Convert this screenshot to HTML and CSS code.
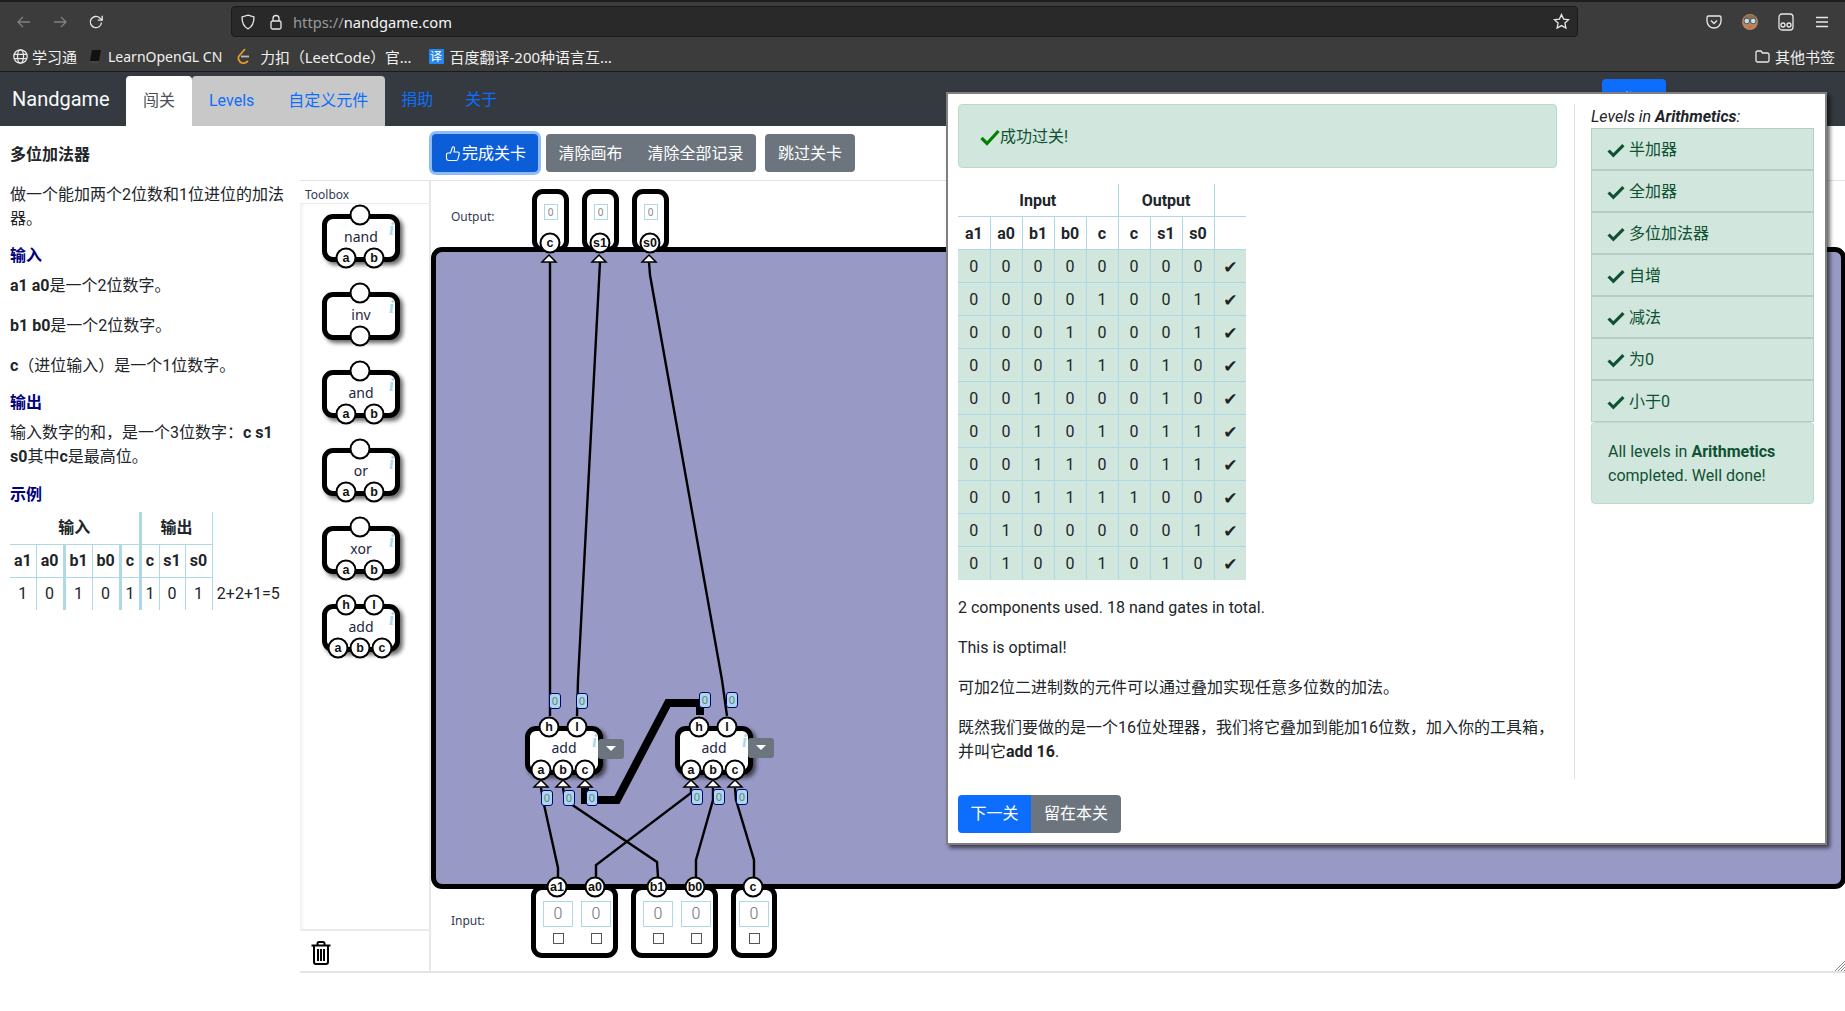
FILE: index.html
```html
<!DOCTYPE html>
<html lang="zh">
<head>
<meta charset="utf-8">
<title>Nandgame</title>
<link rel="stylesheet" href="styles.css">
</head>
<body>
<header class="browser">
  <div class="tb">
    <span class="tb-btn dim"><svg width="16" height="16" viewBox="0 0 16 16"><path d="M14 8H2M7 3L2 8l5 5" class="ic"/></svg></span>
    <span class="tb-btn dim"><svg width="16" height="16" viewBox="0 0 16 16"><path d="M2 8h12M9 3l5 5-5 5" class="ic"/></svg></span>
    <span class="tb-btn"><svg width="16" height="16" viewBox="0 0 16 16"><path d="M13.5 8.5A5.6 5.6 0 1 1 11.8 4L14 6" class="ic"/><path d="M14.2 1.8V6.2H9.8" class="ic"/></svg></span>
    <div class="urlbar">
      <svg class="u-shield" width="16" height="16" viewBox="0 0 16 16"><path d="M8 1.2l6 1.8c0 6-1.6 9.700-6 11.800C3.600 12.700 2 9 2 3z" class="ic"/></svg>
      <svg class="u-lock" width="14" height="16" viewBox="0 0 14 16"><rect x="2" y="7" width="10" height="8" rx="1.500" class="ic"/><path d="M4 7V4.500a3 3 0 0 1 6 0V7" class="ic"/></svg>
      <span class="url"><span class="url-dim">https://</span>nandgame.com</span>
      <svg class="u-star" width="17" height="17" viewBox="0 0 17 17"><path d="M8.500 1.500l2.100 4.600 5 .6-3.700 3.400 1 5-4.400-2.500-4.400 2.500 1-5L1.400 6.700l5-.6z" class="ic"/></svg>
    </div>
    <div class="tb-right">
      <span class="tb-btn"><svg width="16" height="16" viewBox="0 0 16 16"><path d="M2.500 2h11A1.500 1.500 0 0 1 15 3.500V7A7 7 0 0 1 1 7V3.500A1.500 1.500 0 0 1 2.500 2z" class="ic"/><path d="M5 6.500l3 3 3-3" class="ic"/></svg></span>
      <span class="tb-btn"><svg width="16" height="16" viewBox="0 0 16 16"><circle cx="8" cy="8" r="8" fill="#b5865e"/><path d="M2 2.500C5 .5 11 .5 14 2.500V5H2z" fill="#8a6f55"/><circle cx="4.800" cy="7" r="2.800" fill="#bfe3ee" stroke="#555"/><circle cx="11.200" cy="7" r="2.800" fill="#bfe3ee" stroke="#555"/><path d="M5 12h6l-3 3z" fill="#d2694a"/></svg></span>
      <span class="tb-btn"><svg width="16" height="18" viewBox="0 0 16 18"><rect x="1" y="1" width="14" height="16" rx="3" class="ic"/><circle cx="5" cy="12" r="2" class="ic"/><circle cx="11" cy="12" r="2" class="ic"/></svg></span>
      <span class="tb-btn"><svg width="14" height="12" viewBox="0 0 14 12"><path d="M1 1.500h12M1 6h12M1 10.500h12" class="ic"/></svg></span>
    </div>
  </div>
  <div class="bm">
    <svg class="bm-i1" width="15" height="15" viewBox="0 0 15 15"><circle cx="7.500" cy="7.500" r="6.700" class="ic"/><ellipse cx="7.500" cy="7.500" rx="3" ry="6.700" class="ic"/><path d="M1 5.300h13M1 9.700h13" class="ic"/></svg>
    <span class="bm-t1">学习通</span>
    <svg class="bm-i2" width="12" height="14" viewBox="0 0 12 14"><path d="M3 0h9l-2 11H1z" fill="#111"/><path d="M1 11h9l-.5 2.500H.5z" fill="#444"/></svg>
    <span class="bm-t2">LearnOpenGL CN</span>
    <svg class="bm-i3" width="13" height="17" viewBox="0 0 13 17"><path d="M8 1L2 8c-1.500 2 0 6 3 7 2 .5 4 0 6-2" fill="none" stroke="#e89a2c" stroke-width="1.800"/><path d="M4 8.500h8" stroke="#bbb" stroke-width="1.800"/></svg>
    <span class="bm-t3">力扣（LeetCode）官…</span>
    <span class="bm-yi">译</span>
    <span class="bm-t4">百度翻译-200种语言互…</span>
    <svg class="bm-i5" width="15" height="13" viewBox="0 0 15 13"><path d="M1 2.500A1.500 1.500 0 0 1 2.500 1H6l1.500 2h5A1.500 1.500 0 0 1 14 4.500v6a1.500 1.500 0 0 1-1.500 1.500h-10A1.500 1.500 0 0 1 1 10.500z" class="ic"/></svg>
    <span class="bm-t5">其他书签</span>
  </div>
</header>

<nav class="nav">
  <span class="brand">Nandgame</span>
  <a class="tab active">闯关</a>
  <div class="tab-group"><a class="tab">Levels</a><a class="tab">自定义元件</a></div>
  <a class="link">捐助</a>
  <a class="link">关于</a>
  <a class="nav-btn">登录</a>
</nav>

<main class="main">
  <section class="desc">
    <p class="title">多位加法器</p>
    <p>做一个能加两个2位数和1位进位的加法器。</p>
    <h3>输入</h3>
    <p><b>a1 a0</b>是一个2位数字。</p>
    <p><b>b1 b0</b>是一个2位数字。</p>
    <p><b>c</b>（进位输入）是一个1位数字。</p>
    <h3>输出</h3>
    <p>输入数字的和，是一个3位数字：<b>c s1 s0</b>其中<b>c</b>是最高位。</p>
    <h3>示例</h3>
    <table class="ex">
      <colgroup><col class="w26"><col class="w28"><col class="w28"><col class="w28"><col class="w20"><col class="w19"><col class="w26"><col class="w27"><col class="w72"></colgroup>
      <tr><th colspan="5" class="thick-r">输入</th><th colspan="3" class="thin-r">输出</th><th class="nob"></th></tr>
      <tr><th class="thin-r">a1</th><th class="thick-r">a0</th><th class="thin-r">b1</th><th class="thick-r">b0</th><th class="thick-r">c</th><th class="thin-r">c</th><th class="thin-r">s1</th><th class="thin-r">s0</th><th class="nob"></th></tr>
      <tr><td class="thin-r">1</td><td class="thick-r">0</td><td class="thin-r">1</td><td class="thick-r">0</td><td class="thick-r">1</td><td class="thin-r">1</td><td class="thin-r">0</td><td class="thin-r">1</td><td>2+2+1=5</td></tr>
    </table>
  </section>

  <section class="work">
    <div class="actions">
      <button class="btn primary focus"><svg width="18" height="18" viewBox="0 0 18 18"><path d="M2.500 9.500c0-1 .7-1.500 1.500-1.500h2.500l1.800-5.500c.3-.9 2-1 2.200.3.200 1.200-.3 3-.5 4.200h3.700c1.200 0 1.800 1 1.500 2l-1.300 5.200c-.2.800-.9 1.300-1.700 1.300H5c-1.500 0-2.500-1-2.500-2.500z" fill="none" stroke="#fff" stroke-width="1.100"/></svg>完成关卡</button>
      <div class="btn-group"><button class="btn gray">清除画布</button><button class="btn gray">清除全部记录</button></div>
      <button class="btn gray skip">跳过关卡</button>
    </div>
    <div class="stage">
      <aside class="toolbox">
        <div class="tb-head">Toolbox</div>
        <div class="tb-list">
          <div class="comp"><span>nand</span><i>i</i><b class="pin p-top"></b><b class="pin p-a2">a</b><b class="pin p-b2">b</b></div>
          <div class="comp"><span>inv</span><i>i</i><b class="pin p-top"></b><b class="pin p-bot"></b></div>
          <div class="comp"><span>and</span><i>i</i><b class="pin p-top"></b><b class="pin p-a2">a</b><b class="pin p-b2">b</b></div>
          <div class="comp"><span>or</span><i>i</i><b class="pin p-top"></b><b class="pin p-a2">a</b><b class="pin p-b2">b</b></div>
          <div class="comp"><span>xor</span><i>i</i><b class="pin p-top"></b><b class="pin p-a2">a</b><b class="pin p-b2">b</b></div>
          <div class="comp"><span>add</span><i>i</i><b class="pin p-h">h</b><b class="pin p-l">l</b><b class="pin p-a3">a</b><b class="pin p-b3">b</b><b class="pin p-c3">c</b></div>
        </div>
        <div class="tb-foot"><svg width="20" height="24" viewBox="0 0 20 24"><path d="M6.500 4V2.500A1.500 1.500 0 0 1 8 1h4a1.500 1.500 0 0 1 1.500 1.500V4M.5 4.500h19" fill="none" stroke="#000" stroke-width="2"/><path d="M3 5v16a2 2 0 0 0 2 2h10a2 2 0 0 0 2-2V5" fill="none" stroke="#000" stroke-width="2"/><path d="M7 8v12M10 8v12M13 8v12" stroke="#000" stroke-width="2"/></svg></div>
      </aside>
      <div class="canvas">
        <span class="io-label out-label">Output:</span>
        <span class="io-label in-label">Input:</span>
        <div class="board"></div>

        <div class="obox ob1"><div class="oval">0</div><b class="pin opin">c</b></div>
        <div class="obox ob2"><div class="oval">0</div><b class="pin opin">s1</b></div>
        <div class="obox ob3"><div class="oval">0</div><b class="pin opin">s0</b></div>

        <div class="ibox ib1">
          <div class="icell"><div class="ival">0</div><input type="checkbox" class="icheck"></div>
          <div class="icell"><div class="ival">0</div><input type="checkbox" class="icheck"></div>
          <b class="pin ip-1">a1</b><b class="pin ip-2">a0</b>
        </div>
        <div class="ibox ib2">
          <div class="icell"><div class="ival">0</div><input type="checkbox" class="icheck"></div>
          <div class="icell"><div class="ival">0</div><input type="checkbox" class="icheck"></div>
          <b class="pin ip-1">b1</b><b class="pin ip-2">b0</b>
        </div>
        <div class="ibox ib3">
          <div class="icell"><div class="ival">0</div><input type="checkbox" class="icheck"></div>
          <b class="pin ip-3">c</b>
        </div>

        <svg class="wires" width="1414" height="792" viewBox="0 0 1414 792">
          <polyline class="wire" points="119,81 119,535"/>
          <polyline class="wire" points="169,81 147,499 146,535"/>
          <polyline class="wire" points="218,81 219,94 291,499 296,535"/>
          <polyline class="wire" points="110,607 112,619 127,687 127,696"/>
          <polyline class="wire" points="260,607 260,612 165,684 165,696"/>
          <polyline class="wire" points="132,607 134,619 226,681 227,696"/>
          <polyline class="wire" points="282,607 282,619 265,679 265,696"/>
          <polyline class="wire" points="304,607 305,619 323,679 323,696"/>
          <polyline class="wire thick" points="154,607 154,619 186,619 237,522 269,522 269,534"/>
          <polygon class="arrow" points="118,74 111,81 125,81"/>
          <polygon class="arrow" points="168,74 161,81 175,81"/>
          <polygon class="arrow" points="218,74 211,81 225,81"/>
          <polygon class="arrow" points="110,599 103,606 117,606"/>
          <polygon class="arrow" points="132,599 125,606 139,606"/>
          <polygon class="arrow" points="154,599 147,606 161,606"/>
          <polygon class="arrow" points="260,599 253,606 267,606"/>
          <polygon class="arrow" points="282,599 275,606 289,606"/>
          <polygon class="arrow" points="304,599 297,606 311,606"/>
        </svg>

        <div class="comp node n1"><span>add</span><i>i</i><b class="pin p-h">h</b><b class="pin p-l">l</b><b class="pin p-a3">a</b><b class="pin p-b3">b</b><b class="pin p-c3">c</b></div>
        <div class="comp node n2"><span>add</span><i>i</i><b class="pin p-h">h</b><b class="pin p-l">l</b><b class="pin p-a3">a</b><b class="pin p-b3">b</b><b class="pin p-c3">c</b></div>
        <div class="drop d1"></div>
        <div class="drop d2"></div>

        <span class="bub b1">0</span><span class="bub b2">0</span><span class="bub b3">0</span><span class="bub b4">0</span><span class="bub b5">0</span>
        <span class="bub b6">0</span><span class="bub b7">0</span><span class="bub b8">0</span><span class="bub b9">0</span><span class="bub b10">0</span>

        <svg class="grip" width="10" height="10" viewBox="0 0 10 10"><path d="M10 0L0 10M10 3L3 10M10 6L6 10M10 9L9 10" stroke="#888" stroke-width="1"/></svg>
      </div>
    </div>
  </section>
</main>

<div class="modal">
  <div class="modal-row">
    <div class="modal-main">
      <div class="alert"><svg width="20" height="17" viewBox="0 0 20 17"><path d="M1.500 9l5.500 5.500L18.500 2" fill="none" stroke="#008000" stroke-width="3.200"/></svg>成功过关!</div>
      <table class="truth">
        <colgroup><col class="c32"><col class="c32"><col class="c32"><col class="c32"><col class="c32"><col class="c32"><col class="c32"><col class="c32"><col class="c32"></colgroup>
        <tr class="h1"><th colspan="5" class="r">Input</th><th colspan="3" class="r">Output</th><th class="r-none"></th></tr>
        <tr><th>a1</th><th>a0</th><th>b1</th><th>b0</th><th>c</th><th>c</th><th>s1</th><th>s0</th><th class="r-none"></th></tr>
        <tr class="ok"><td>0</td><td>0</td><td>0</td><td>0</td><td>0</td><td>0</td><td>0</td><td>0</td><td class="tick">✔</td></tr>
        <tr class="ok"><td>0</td><td>0</td><td>0</td><td>0</td><td>1</td><td>0</td><td>0</td><td>1</td><td class="tick">✔</td></tr>
        <tr class="ok"><td>0</td><td>0</td><td>0</td><td>1</td><td>0</td><td>0</td><td>0</td><td>1</td><td class="tick">✔</td></tr>
        <tr class="ok"><td>0</td><td>0</td><td>0</td><td>1</td><td>1</td><td>0</td><td>1</td><td>0</td><td class="tick">✔</td></tr>
        <tr class="ok"><td>0</td><td>0</td><td>1</td><td>0</td><td>0</td><td>0</td><td>1</td><td>0</td><td class="tick">✔</td></tr>
        <tr class="ok"><td>0</td><td>0</td><td>1</td><td>0</td><td>1</td><td>0</td><td>1</td><td>1</td><td class="tick">✔</td></tr>
        <tr class="ok"><td>0</td><td>0</td><td>1</td><td>1</td><td>0</td><td>0</td><td>1</td><td>1</td><td class="tick">✔</td></tr>
        <tr class="ok"><td>0</td><td>0</td><td>1</td><td>1</td><td>1</td><td>1</td><td>0</td><td>0</td><td class="tick">✔</td></tr>
        <tr class="ok"><td>0</td><td>1</td><td>0</td><td>0</td><td>0</td><td>0</td><td>0</td><td>1</td><td class="tick">✔</td></tr>
        <tr class="ok"><td>0</td><td>1</td><td>0</td><td>0</td><td>1</td><td>0</td><td>1</td><td>0</td><td class="tick">✔</td></tr>
      </table>
      <p>2 components used. 18 nand gates in total.</p>
      <p>This is optimal!</p>
      <p>可加2位二进制数的元件可以通过叠加实现任意多位数的加法。</p>
      <p class="last">既然我们要做的是一个16位处理器，我们将它叠加到能加16位数，加入你的工具箱，并叫它<b>add 16</b>.</p>
    </div>
    <aside class="modal-side">
      <div class="side-head"><em>Levels in <b>Arithmetics</b>:</em></div>
      <ul class="levels">
        <li><svg width="17" height="14" viewBox="0 0 17 14"><path d="M1.500 7l4.500 4.500L15.500 2" class="chk"/></svg>半加器</li>
        <li><svg width="17" height="14" viewBox="0 0 17 14"><path d="M1.500 7l4.500 4.500L15.500 2" class="chk"/></svg>全加器</li>
        <li><svg width="17" height="14" viewBox="0 0 17 14"><path d="M1.500 7l4.500 4.500L15.500 2" class="chk"/></svg>多位加法器</li>
        <li><svg width="17" height="14" viewBox="0 0 17 14"><path d="M1.500 7l4.500 4.500L15.500 2" class="chk"/></svg>自增</li>
        <li><svg width="17" height="14" viewBox="0 0 17 14"><path d="M1.500 7l4.500 4.500L15.500 2" class="chk"/></svg>减法</li>
        <li><svg width="17" height="14" viewBox="0 0 17 14"><path d="M1.500 7l4.500 4.500L15.500 2" class="chk"/></svg>为0</li>
        <li><svg width="17" height="14" viewBox="0 0 17 14"><path d="M1.500 7l4.500 4.500L15.500 2" class="chk"/></svg>小于0</li>
      </ul>
      <div class="done">All levels in <b>Arithmetics</b> completed. Well done!</div>
    </aside>
  </div>
  <div class="modal-btns"><button class="btn blue">下一关</button><button class="btn gray">留在本关</button></div>
</div>
</body>
</html>
```
FILE: styles.css
```css
* { box-sizing: border-box; }
html, body { margin: 0; padding: 0; }
body {
  position: relative;
  width: 1845px;
  height: 1011px;
  overflow: hidden;
  background: #fff;
  color: #212529;
  font: 16px/24px Roboto, "Noto Sans CJK SC", sans-serif;
}
p { margin: 0 0 16px; }
button { font: inherit; border: 0; cursor: pointer; }

/* browser chrome */
.browser { height: 72px; background: #3c3c3c; border-top: 2px solid #1e1e1e; border-bottom: 1px solid #1b1b1b; color: #f0f0f0; font-family: "Noto Sans", "Noto Sans CJK SC", sans-serif; }
.ic { fill: none; stroke: #e8e8e8; stroke-width: 1.300; }
.tb { display: flex; align-items: flex-start; height: 40px; padding: 4px 0 0 6px; }
.tb-btn { display: flex; align-items: center; justify-content: center; width: 36px; height: 32px; }
.dim { opacity: .4; }
.urlbar { display: flex; align-items: center; width: 1347px; height: 31px; margin-left: 117px; background: #292929; border: 1px solid #1b1b1b; border-radius: 4px; padding: 0 7px 0 8px; }
.u-shield { flex: none; }
.u-lock { flex: none; margin-left: 13px; }
.url { margin-left: 10px; font-size: 14.700px; color: #f5f5f5; }
.url-dim { color: #9a9a9a; }
.u-star { margin-left: auto; }
.tb-right { display: flex; margin-left: 118px; }
.bm { display: flex; align-items: center; height: 29px; font-size: 15px; white-space: nowrap; }
.bm-i1 { margin-left: 13px; }
.bm-t1 { margin-left: 4px; }
.bm-i2 { margin-left: 12px; }
.bm-t2 { margin-left: 7px; font-size: 14px; }
.bm-i3 { margin-left: 15px; }
.bm-t3 { margin-left: 10px; font-size: 14.800px; }
.bm-yi { display: flex; align-items: center; justify-content: center; width: 15px; height: 15px; margin-left: 17px; background: #2486f0; color: #fff; font-size: 12px; border-radius: 1px; }
.bm-t4 { margin-left: 6px; }
.bm-i5 { margin-left: auto; }
.bm-t5 { margin: 0 10px 0 5px; }

/* site nav */
.nav { display: flex; align-items: flex-end; height: 54px; background: #343a40; position: relative; }
.brand { width: 126px; padding-left: 12px; height: 50px; font-size: 20px; line-height: 47px; color: #f8f9fa; }
.tab { display: block; height: 50px; padding: 0 17px; line-height: 49px; color: #0d6efd; }
.tab.active { width: 66px; background: #fff; color: #495057; text-align: center; padding: 0; border-radius: 4px 4px 0 0; }
.tab-group { display: flex; background: #c8c8c8; border-radius: 4px 4px 0 0; }
.link { height: 50px; line-height: 48px; padding: 0 16px; color: #0d6efd; }
.nav-btn { width: 64px; height: 38px; margin: 0 179px 9px auto; background: #0d6efd; color: #fff; text-align: center; line-height: 42px; border-radius: 4px; }

/* main */
.main { display: flex; height: 847px; align-items: flex-start; }
.desc { width: 300px; flex: none; padding: 17px 16px 0 10px; }
.title { font-weight: 700; }
.desc h3 { margin: -3px 0 6px; font-size: 16px; line-height: 24px; font-weight: 700; color: #000080; }
.desc p:last-of-type { margin-bottom: 17px; }

table { border-collapse: collapse; table-layout: fixed; text-align: center; }
th, td { padding: 4px 0; font-weight: 400; }
th { font-weight: 700; }
.ex { width: 274px; margin-top: -1px; }
.ex th, .ex td { border-bottom: 1px solid #add8e6; }
.ex tr:last-child td { border-bottom: 0; }
.ex .nob { border-bottom: 0; }
.thin-r { border-right: 1px solid #add8e6; }
.thick-r { border-right: 3px solid #add8e6; }
.w19 { width: 19px; } .w20 { width: 20px; } .w26 { width: 26px; } .w27 { width: 27px; } .w28 { width: 28px; } .w72 { width: 72px; }
.c32 { width: 32px; }

.work { flex: 1; min-width: 0; }
.actions { display: flex; align-items: center; height: 55px; padding: 0 0 1px 132px; border-bottom: 1px solid #e3e3e3; }
.btn { display: inline-flex; align-items: center; height: 38px; padding: 2px 12.500px 0; color: #fff; }
.primary { background: #0b5ed7; border-radius: 4px; padding-left: 12px; padding-right: 12px; }
.focus { box-shadow: 0 0 0 3px #8fbbf9; }
.gray { background: #6c757d; }
.blue { background: #0d6efd; }
.btn-group { display: flex; margin-left: 8px; border-radius: 4px; overflow: hidden; }
.skip { margin-left: 9px; border-radius: 4px; padding: 2px 13px 0; }

.stage { display: flex; height: 792px; border-bottom: 2px solid #e3e3e3; }
.toolbox { display: flex; flex-direction: column; width: 131px; flex: none; border-right: 2px solid #e8e8e8; background: linear-gradient(90deg, #f0f0f0, #fff 5px); }
.tb-head { height: 23px; padding-left: 5px; font: 12px/28px "Noto Sans", sans-serif; color: #333a50; background: #fff; border-bottom: 1px solid #eaeaea; }
.tb-list { flex: 1; display: flex; flex-direction: column; gap: 30px; padding: 10px 0 0 22px; }
.tb-foot { height: 42px; padding: 10px 0 0 11px; background: #fff; border-top: 2px solid #eaeaea; }

/* components */
.comp { position: relative; display: flex; align-items: center; justify-content: center; flex: none; width: 78px; height: 48px; background: #fff; border: 5px solid #000; border-radius: 11px; box-shadow: 3px 3px 4px rgba(0,0,0,.6); }
.comp span { margin-bottom: 3px; font: 14px/1 "Noto Sans", sans-serif; color: #1d2540; }
.comp i { position: absolute; right: 1px; top: 1px; font: italic 700 18px/1 "Liberation Serif", serif; color: #a9d9ea; }
.pin { position: absolute; display: flex; align-items: center; justify-content: center; width: 21px; height: 21px; transform: translate(-50%, -50%); background: #fff; border: 2px solid #000; border-radius: 50%; font: 700 12.500px/1 "Liberation Sans", sans-serif; color: #111; }
.p-top { left: 33px; top: -4px; }
.p-bot { left: 33px; top: 39px; }
.p-a2 { left: 19px; top: 39px; }
.p-b2 { left: 47px; top: 39px; }
.p-h { left: 19px; top: -4px; }
.p-l { left: 47px; top: -4px; }
.p-a3 { left: 11px; top: 39px; }
.p-b3 { left: 33px; top: 39px; }
.p-c3 { left: 55px; top: 39px; }

/* canvas */
.canvas { position: relative; flex: 1; min-width: 0; overflow: hidden; }
.board { position: absolute; left: 0; top: 66px; width: 1415px; height: 642px; background: #9999c6; border: 5px solid #000; border-radius: 11px; }
.io-label { position: absolute; left: 20px; font: 12px/16px "Noto Sans", sans-serif; color: #333a50; }
.out-label { top: 28px; }
.in-label { top: 732px; }

.obox { position: absolute; top: 8px; width: 37px; height: 63px; background: #fff; border: 5px solid #000; border-radius: 11px; }
.ob1 { left: 101px; } .ob2 { left: 151px; } .ob3 { left: 201px; }
.oval { width: 14px; height: 16px; margin: 10px auto 0; border: 1px solid #add8e6; font: 10px/14px "Noto Sans", sans-serif; color: #888; text-align: center; }
.opin { left: 13px; top: 49px; }

.ibox { position: absolute; top: 704px; display: flex; gap: 8px; height: 73px; padding: 11px 3px 0 7px; background: #fff; border: 5px solid #000; border-radius: 11px; }
.ib1 { left: 100px; width: 87px; }
.ib2 { left: 200px; width: 87px; }
.ib3 { left: 300px; width: 46px; padding-left: 3px; }
.icell { display: flex; flex-direction: column; align-items: center; width: 30px; }
.ival { width: 30px; height: 26px; border: 1px solid #add8e6; font-weight: 300; color: #6b6b80; text-align: center; line-height: 24px; }
.icheck { appearance: none; width: 11px; height: 11px; margin: 6px 0 0; background: #fff; border: 1px solid #555; }
.ip-1 { left: 21px; top: -3px; }
.ip-2 { left: 59px; top: -3px; }
.ip-3 { left: 17px; top: -3px; }

.wires { position: absolute; left: 0; top: 0; }
.wire { fill: none; stroke: #000; stroke-width: 2.400; }
.thick { stroke-width: 8; }
.arrow { fill: #fff; stroke: #000; stroke-width: 1.500; }

.node { position: absolute; height: 49px; }
.node span { margin-bottom: 5px; }
.n1 { left: 94px; top: 545px; }
.n2 { left: 244px; top: 545px; }
.drop { position: absolute; width: 26px; height: 20px; background: #6c757d; border-radius: 3px; }
.drop::after { content: ""; position: absolute; left: 8px; top: 7px; border: 5px solid transparent; border-top-color: #fff; border-bottom: 0; }
.d1 { left: 167px; top: 558px; }
.d2 { left: 317px; top: 557px; }

.bub { position: absolute; width: 12px; height: 16px; transform: translate(-50%, -50%); background: #add8e6; border: 1px solid #000080; border-radius: 3px; font: 11px/14px "Noto Sans", sans-serif; color: #667f8c; text-align: center; }
.b1 { left: 124px; top: 520px; } .b2 { left: 151px; top: 520px; }
.b3 { left: 116px; top: 617px; } .b4 { left: 138px; top: 617px; } .b5 { left: 161px; top: 617px; }
.b6 { left: 274px; top: 519px; } .b7 { left: 301px; top: 519px; }
.b8 { left: 266px; top: 616px; } .b9 { left: 288px; top: 616px; } .b10 { left: 311px; top: 616px; }
.grip { position: absolute; right: 0; bottom: 0; }

/* modal */
.modal { position: absolute; left: 946px; top: 92px; width: 881px; padding: 10px 11px 10px 10px; background: #fff; border: 2px solid #7f7f7f; box-shadow: 3px 3px 4px rgba(0,0,0,.6); }
.modal-row { display: flex; }
.modal-main { width: 599px; flex: none; }
.modal-main .last { margin-bottom: 15px; }
.alert { display: flex; align-items: center; height: 64px; margin-bottom: 16px; padding: 2px 0 0 21px; background: #d1e7dd; border: 1px solid #badbcc; border-radius: 4px; color: #0f5132; }
.truth { width: 288px; margin-bottom: 16px; }
.truth th, .truth td { height: 33px; padding: 5px 0 3px; border-bottom: 1px solid #add8e6; border-right: 1px solid #add8e6; }
.truth .h1 th { height: 32px; }
.truth .r-none { border-right: 0; }
.truth tr:last-child td { border-bottom: 0; }
.truth td { background: #d1e7dd; }
.truth .tick { border-right: 0; font-family: "DejaVu Sans", sans-serif; font-size: 17px; color: #222; }
.modal-side { width: 240px; flex: none; margin-left: 17px; padding-left: 16px; border-left: 1px solid #dee2e6; }
.side-head { height: 24px; padding-top: 1px; }
.levels { list-style: none; margin: 0; padding: 0; }
.levels li { display: flex; align-items: center; gap: 4px; height: 42px; padding: 2px 0 0 15px; background: #d1e7dd; border: 1px solid #b5cdc2; color: #0f5132; }
.levels svg { width: 18px; height: 15px; }
.chk { fill: none; stroke: #0f5132; stroke-width: 3; }
.done { padding: 17px 16px 15px; background: #d1e7dd; border: 1px solid #badbcc; border-radius: 4px; color: #0f5132; }
.modal-btns { display: flex; margin-top: 16px; }
.modal-btns .btn { padding-top: 0; }
.modal-btns .btn:first-child { border-radius: 4px 0 0 4px; }
.modal-btns .btn:last-child { border-radius: 0 4px 4px 0; padding: 0 13px; }
```
